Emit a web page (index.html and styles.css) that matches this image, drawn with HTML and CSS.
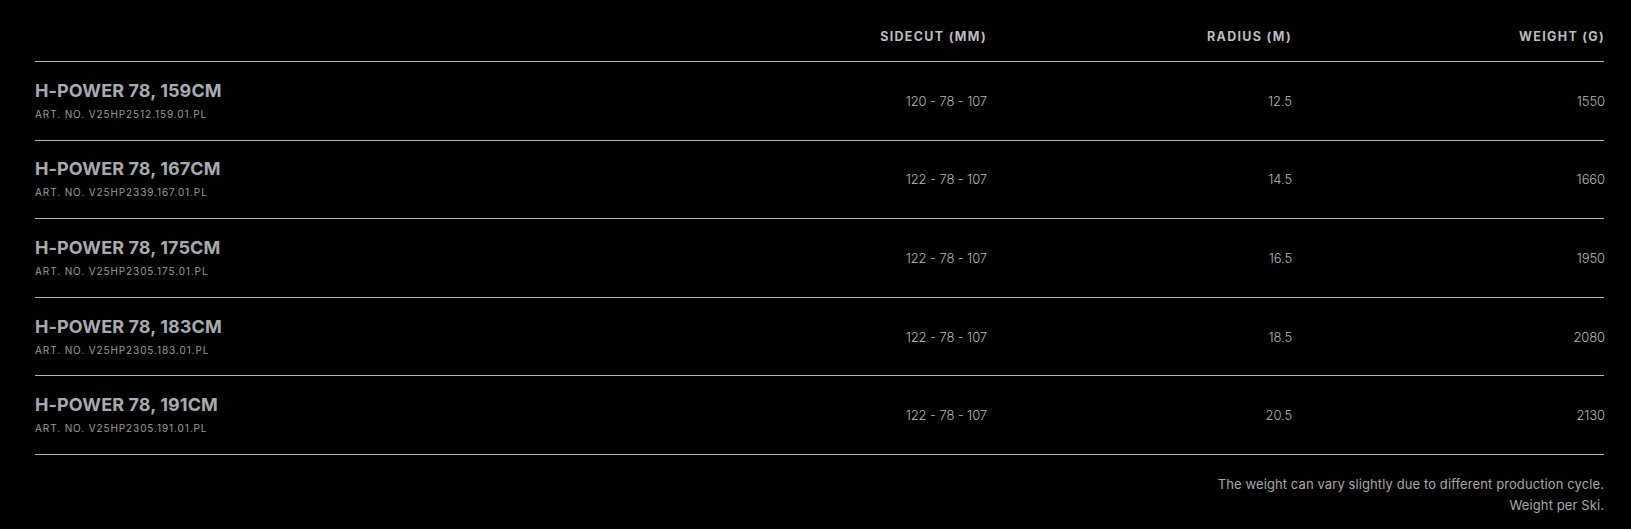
FILE: index.html
```html
<!DOCTYPE html>
<html lang="en">
<head>
<meta charset="utf-8">
<title>Technical data</title>
<link rel="stylesheet" href="styles.css">
</head>
<body>
<div class="specs">
  <div class="row head">
    <div class="cell name"></div>
    <div class="cell num">SIDECUT (MM)</div>
    <div class="cell num">RADIUS (M)</div>
    <div class="cell num">WEIGHT (G)</div>
  </div>
  <div class="row item">
    <div class="cell name"><div class="title">H-POWER 78, 159CM</div><div class="art">ART. NO. V25HP2512.159.01.PL</div></div>
    <div class="cell num">120 - 78 - 107</div>
    <div class="cell num">12.5</div>
    <div class="cell num">1550</div>
  </div>
  <div class="row item">
    <div class="cell name"><div class="title">H-POWER 78, 167CM</div><div class="art">ART. NO. V25HP2339.167.01.PL</div></div>
    <div class="cell num">122 - 78 - 107</div>
    <div class="cell num">14.5</div>
    <div class="cell num">1660</div>
  </div>
  <div class="row item">
    <div class="cell name"><div class="title">H-POWER 78, 175CM</div><div class="art">ART. NO. V25HP2305.175.01.PL</div></div>
    <div class="cell num">122 - 78 - 107</div>
    <div class="cell num">16.5</div>
    <div class="cell num">1950</div>
  </div>
  <div class="row item">
    <div class="cell name"><div class="title">H-POWER 78, 183CM</div><div class="art">ART. NO. V25HP2305.183.01.PL</div></div>
    <div class="cell num">122 - 78 - 107</div>
    <div class="cell num">18.5</div>
    <div class="cell num">2080</div>
  </div>
  <div class="row item">
    <div class="cell name"><div class="title">H-POWER 78, 191CM</div><div class="art">ART. NO. V25HP2305.191.01.PL</div></div>
    <div class="cell num">122 - 78 - 107</div>
    <div class="cell num">20.5</div>
    <div class="cell num">2130</div>
  </div>
  <div class="note">
    <p>The weight can vary slightly due to different production cycle.</p>
    <p>Weight per Ski.</p>
  </div>
</div>
</body>
</html>
```

FILE: styles.css
```css
html, body {
  margin: 0;
  padding: 0;
  background: #000;
}
body {
  font-family: Inter, "Liberation Sans", sans-serif;
  color: #b0b0b0;
}
.specs {
  padding: 0 27px 0 35px;
}
.row {
  display: grid;
  grid-template-columns: 1fr 200px 305px 312px;
  border-bottom: 1px solid #b4b4b4;
  box-sizing: border-box;
}
.head {
  height: 62px;
  align-items: end;
  padding-bottom: 17px;
}
.head .cell {
  font-size: 12.5px;
  font-weight: 700;
  letter-spacing: 1.3px;
  color: #bdbdbd;
  line-height: 15px;
}
.item {
  height: 78.6px;
  align-items: center;
}
.num {
  text-align: right;
}
.item .num {
  font-size: 13px;
  font-weight: 300;
  color: #b8b8b8;
  letter-spacing: -0.1px;
}
.head .num:last-child,
.item .num:last-child {
  margin-right: -1px;
}
.name {
  display: flex;
  flex-direction: column;
  padding-bottom: 1px;
}
.title {
  font-size: 18px;
  font-weight: 700;
  color: #a8abae;
  line-height: 22px;
  letter-spacing: 0.1px;
}
.art {
  font-size: 10px;
  letter-spacing: 0.9px;
  color: #9c9c9c;
  line-height: 14px;
  margin-top: 5px;
}
.note {
  text-align: right;
  font-size: 13px;
  line-height: 21px;
  letter-spacing: 0.1px;
  color: #a9a9a9;
  padding-top: 19px;
}
.note p {
  margin: 0;
}
```
